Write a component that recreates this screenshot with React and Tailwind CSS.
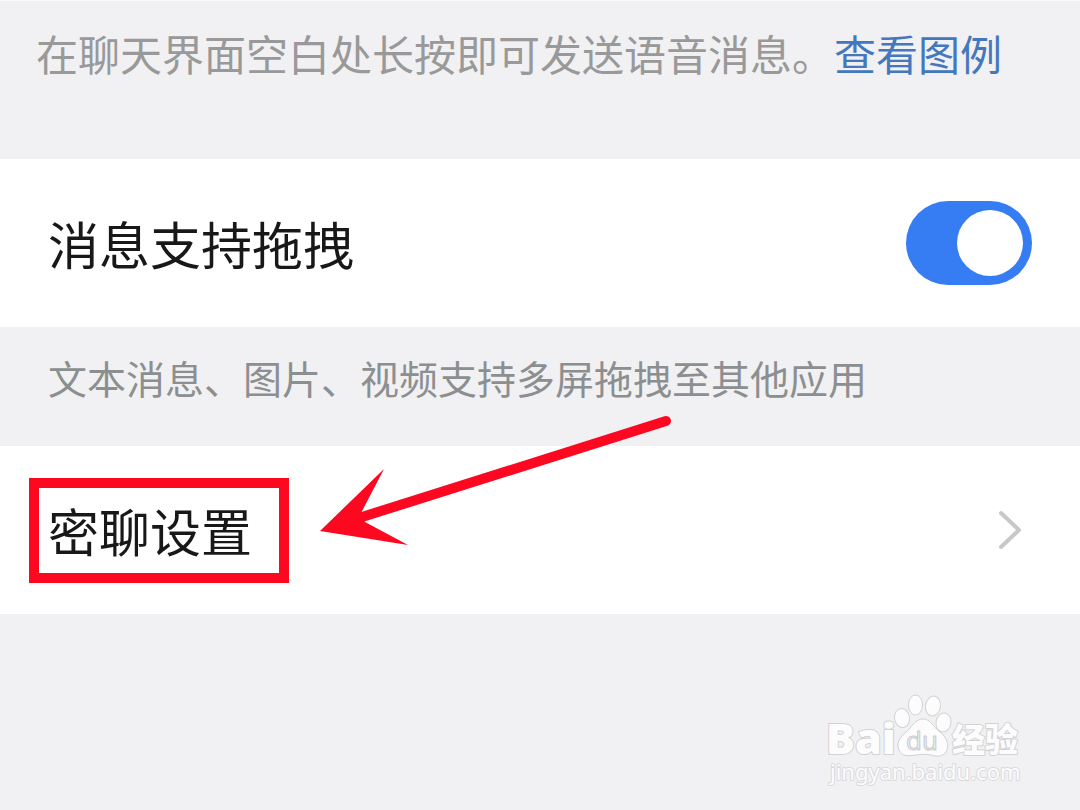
import React, { useState } from 'react';

function Hint({ children, className }) {
  return <p className={`whitespace-nowrap ${className}`}>{children}</p>;
}

function Toggle({ id, checked, onChange }) {
  return (
    <span className="relative inline-flex shrink-0">
      <input
        id={id}
        type="checkbox"
        role="switch"
        checked={checked}
        onChange={onChange}
        className="peer h-[84px] w-[126px] appearance-none rounded-full bg-gray-300 checked:bg-[#367df4] transition-colors cursor-pointer"
      />
      <span className="pointer-events-none absolute top-[9px] left-[9px] peer-checked:left-[51px] h-[66px] w-[66px] rounded-full bg-white transition-all"></span>
    </span>
  );
}

function Watermark() {
  return (
    <svg viewBox="0 0 200 100" className="h-[100px] w-[200px]" fill="#fcfcfd" stroke="#d2d2d4" strokeWidth="1" strokeLinejoin="round">
      {/* Wordmark */}
      <text x="0" y="60" fontSize="43" fontWeight="800" fontFamily="'Open Sans', sans-serif" paintOrder="stroke" strokeWidth="2">Bai</text>

      {/* Paw */}
      <ellipse cx="76" cy="24" rx="7.5" ry="9.5" transform="rotate(-8 76 24)" />
      <ellipse cx="89.5" cy="11" rx="7" ry="10" />
      <ellipse cx="107" cy="12" rx="7.5" ry="10" transform="rotate(10 107 12)" />
      <ellipse cx="117.5" cy="28.5" rx="7.5" ry="9.5" transform="rotate(8 117.500 28.500)" />
      <path d="M97 25C89 25 86 33 80 38C74 43 70 49 73 56C76 63 83 62 90 61C95 60 99 60 105 61C112 63 118 63 121 56C123 49 120 43 114 38C107 33 105 25 97 25Z" />
      <text x="80" y="56" fontSize="26" fontFamily="'Open Sans', sans-serif" fill="#f1f1f3" stroke="#cacacc">du</text>

      <text x="126" y="58" fontSize="33" fontWeight="900" fontFamily="'Noto Sans CJK SC', sans-serif" paintOrder="stroke" strokeWidth="2">经验</text>
      <text x="4" y="86" fontSize="22" fontFamily="'Noto Sans', sans-serif" paintOrder="stroke" stroke="#dadadc" strokeWidth="2">jingyan.baidu.com</text>
    </svg>
  );
}

export default function App() {
  const [dragEnabled, setDragEnabled] = useState(true);

  return (
    <main className="relative min-h-screen flex flex-col overflow-hidden border-t border-[#fafafa] bg-[#f1f1f3] font-['Noto_Sans_CJK_SC',sans-serif]">
      <Hint className="px-9 pt-[22px] pb-[76px] text-[42px] leading-[60px] text-[#999999]">
        在聊天界面空白处长按即可发送语音消息。<a href="#example" className="text-[#4577bd]">查看图例</a>
      </Hint>

      {/* Drag setting */}
      <div className="flex h-[168px] items-center justify-between bg-white px-12">
        <label htmlFor="drag" className="text-[51px] leading-[72px] text-[#181818]">消息支持拖拽</label>
        <Toggle id="drag" checked={dragEnabled} onChange={(e) => setDragEnabled(e.target.checked)} />
      </div>
      <Hint className="px-12 pt-5 pb-[39px] text-[39px] leading-[60px] text-[#8c8f90]">
        文本消息、图片、视频支持多屏拖拽至其他应用
      </Hint>

      {/* Secret chat */}
      <button type="button" className="relative flex h-[168px] w-full items-center justify-between bg-white px-12 text-left cursor-pointer">
        <span className="text-[51px] leading-[72px] text-[#181818]">密聊设置</span>
        <svg viewBox="0 0 36 48" className="h-12 w-9" fill="none" stroke="#c8c8c8" strokeWidth="4" strokeLinecap="round" strokeLinejoin="round">
          <path d="M5 7L23 24L5 41" />
        </svg>

        {/* Highlight frame and arrow */}
        <span className="pointer-events-none absolute left-[29px] top-8 h-[105px] w-[260px] border-[10px] border-[#fc0820]"></span>
        <svg viewBox="0 0 360 140" className="pointer-events-none absolute left-[316px] -top-8 h-[140px] w-[360px]">
          <path d="M350 7L46 103" stroke="#fc0820" strokeWidth="10" strokeLinecap="round" />
          <path d="M4 117L68 55L45 99L49 108L92 131Z" fill="#fc0820" />
        </svg>
      </button>

      <footer className="flex flex-1 items-end justify-end pr-[54px] pb-4">
        <Watermark />
      </footer>
    </main>
  );
}
